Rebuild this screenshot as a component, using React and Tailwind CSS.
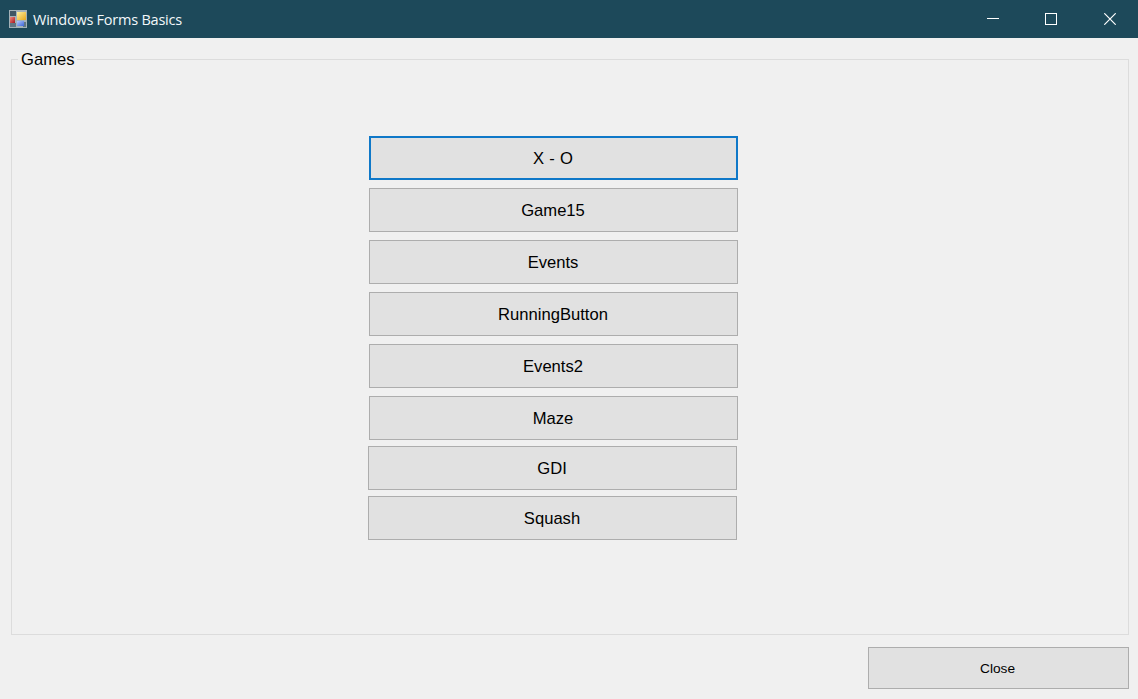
const games = ["X - O", "Game15", "Events", "RunningButton", "Events2", "Maze"];
const moreGames = ["GDI", "Squash"];

const base =
  "flex h-[44px] w-[369px] items-center justify-center bg-[#e1e1e1] pr-[1px] pt-[2px] text-[16.6px] leading-none text-black outline-none";

function GameButton({ label, focused }) {
  return (
    <button
      className={
        focused
          ? `${base} border-2 border-[#0f78c8] tracking-[0.3px]`
          : `${base} border border-[#adadad]`
      }
    >
      {label}
    </button>
  );
}

function AppIcon() {
  return (
    <svg width="18" height="18" viewBox="0 0 18 18">
      <defs>
        <linearGradient id="yellow" x1="0" y1="0" x2="1" y2="1">
          <stop offset="0" stopColor="#fdf0a0" />
          <stop offset="1" stopColor="#e6a81c" />
        </linearGradient>
        <linearGradient id="red" x1="0" y1="0" x2="1" y2="1">
          <stop offset="0" stopColor="#ee8a80" />
          <stop offset="1" stopColor="#a8141c" />
        </linearGradient>
        <linearGradient id="blue" x1="0" y1="0" x2="1" y2="1">
          <stop offset="0" stopColor="#b4c8fc" />
          <stop offset="1" stopColor="#3c64d8" />
        </linearGradient>
      </defs>
      <rect width="18" height="18" fill="#a4b2b8" />
      <rect x="1" y="1" width="6" height="5" fill="#405664" />
      <rect x="1" y="13" width="6" height="4" fill="#607684" />
      <rect x="14" y="12" width="3" height="5" fill="#607684" />
      <rect x="1" y="7" width="5" height="6" fill="url(#red)" />
      <rect x="8" y="2" width="9" height="8" fill="url(#yellow)" />
      <rect x="8" y="11" width="7" height="5" fill="url(#blue)" />
    </svg>
  );
}

export default function App() {
  return (
    <div className="flex h-[699px] w-[1138px] flex-col overflow-hidden bg-[#f0f0f0] font-['Liberation_Sans',Arial,sans-serif] text-black">
      <header className="flex h-[38px] shrink-0 items-center bg-[#1d495a] pl-[9px]">
        <AppIcon />
        <h1 className="ml-[6px] whitespace-nowrap pt-[2px] font-['Open_Sans','Noto_Sans',sans-serif] text-[14.5px] leading-5 tracking-[-0.23px] text-[#f2f8fa]">
          Windows Forms Basics
        </h1>
        <div className="ml-auto flex h-full">
          <button className="flex w-[58px] items-center justify-center" aria-label="Minimize">
            <svg width="12" height="12" viewBox="0 0 12 12" shapeRendering="crispEdges">
              <path d="M0 5.5H12" stroke="#fff" />
            </svg>
          </button>
          <button className="flex w-[58px] items-center justify-center" aria-label="Maximize">
            <svg width="12" height="12" viewBox="0 0 12 12" shapeRendering="crispEdges">
              <rect x=".5" y=".5" width="11" height="11" fill="none" stroke="#fff" />
            </svg>
          </button>
          <button className="flex w-[58px] items-center justify-center pl-[2px]" aria-label="Close window">
            <svg width="12" height="12" viewBox="0 0 12 12">
              <path d="M.3.3l11.4 11.4M11.7.3L.3 11.7" stroke="#fff" strokeWidth="1.2" />
            </svg>
          </button>
        </div>
      </header>
      <main className="flex flex-1 flex-col pl-[11px] pr-[9px] pt-[11px]">
        <fieldset className="h-[586px] border border-[#dcdcdc] pl-[6px]">
          <legend className="h-[21px] px-[3px] text-[16.6px] leading-[22px]">Games</legend>
          <div className="ml-[350px] mt-[66px] flex flex-col">
            <div className="ml-px flex flex-col gap-2">
              {games.map((g, i) => (
                <GameButton key={g} label={g} focused={i === 0} />
              ))}
            </div>
            <div className="mt-[6px] flex flex-col gap-[6px]">
              {moreGames.map((g) => (
                <GameButton key={g} label={g} />
              ))}
            </div>
          </div>
        </fieldset>
        <button className="mt-[12px] flex h-[42px] w-[261px] items-center justify-center self-end border border-[#adadad] bg-[#e1e1e1] pr-[2px] pt-[2px] text-[13.7px] leading-none">
          Close
        </button>
      </main>
    </div>
  );
}
